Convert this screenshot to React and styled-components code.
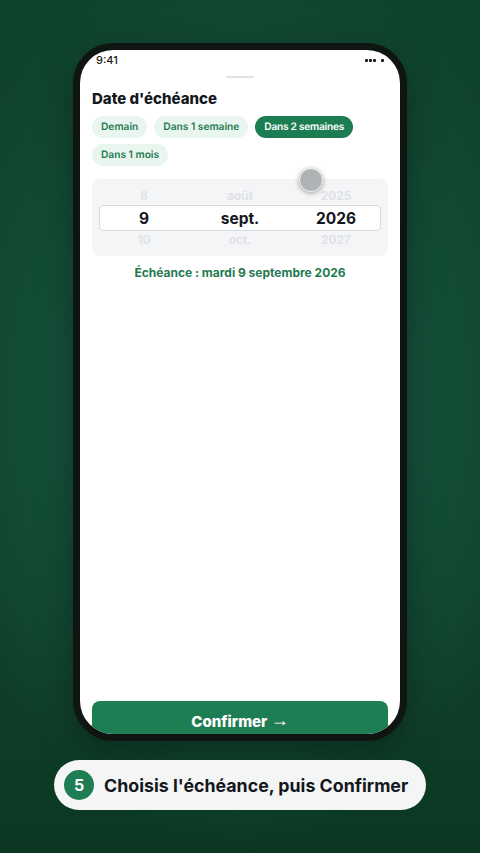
import React from "react";
import styled, { createGlobalStyle } from "styled-components";

const GlobalStyle = createGlobalStyle`
  html, body {
    margin: 0;
    padding: 0;
    background: #0f4029;
    font-family: Inter, "Noto Sans", sans-serif;
  }
`;

const presets = [
  { label: "Demain" },
  { label: "Dans 1 semaine" },
  { label: "Dans 2 semaines", active: true },
  { label: "Dans 1 mois" },
];

const rows = [
  ["8", "août", "2025"],
  ["9", "sept.", "2026"],
  ["10", "oct.", "2027"],
];

function App() {
  return (
    <Page>
      <GlobalStyle />
      <Phone>
        <Screen>
          <StatusBar>
            <span>9:41</span>
            <StatusDots>
              <Dot />
              <Dot />
              <Dot />
              <Dot $gap />
            </StatusDots>
          </StatusBar>
          <Handle />
          <Title>Date d'échéance</Title>
          <Chips>
            {presets.map((p) => (
              <Chip key={p.label} $active={p.active}>
                {p.label}
              </Chip>
            ))}
          </Chips>
          <Wheel>
            <Touch />
            {rows.map((r, i) => (
              <WheelRow key={r[0]} $selected={i === 1}>
                {r.map((v) => (
                  <span key={v}>{v}</span>
                ))}
              </WheelRow>
            ))}
          </Wheel>
          <DueDate>Échéance : mardi 9 septembre 2026</DueDate>
          <Spacer />
          <ConfirmButton>
            Confirmer <Arrow>→</Arrow>
          </ConfirmButton>
        </Screen>
      </Phone>
      <Caption>
        <StepBadge>5</StepBadge>
        <CaptionText>Choisis l'échéance, puis Confirmer</CaptionText>
      </Caption>
    </Page>
  );
}

const Page = styled.div`
  width: 480px;
  height: 853px;
  overflow: hidden;
  box-sizing: border-box;
  padding-top: 43px;
  display: flex;
  flex-direction: column;
  align-items: center;
  background:
    radial-gradient(ellipse 320px 440px at 50% 47%, #175a3b 0%, #14503a 55%, rgba(15, 64, 41, 0) 100%),
    linear-gradient(180deg, #0f442c 0%, #0f4029 70%, #0c3823 100%);
`;

const Phone = styled.div`
  width: 334px;
  height: 698px;
  box-sizing: border-box;
  padding: 7px;
  border-radius: 40px;
  background: #0e1512;
  box-shadow: 0 12px 36px rgba(0, 0, 0, 0.35);
`;

const Screen = styled.div`
  height: 100%;
  box-sizing: border-box;
  padding: 0 12px;
  border-radius: 33px;
  overflow: hidden;
  background: #ffffff;
  display: flex;
  flex-direction: column;
`;

const StatusBar = styled.div`
  height: 20px;
  padding: 0 4px;
  display: flex;
  align-items: center;
  justify-content: space-between;
  font-size: 11px;
  font-weight: 500;
  color: #1a1c20;
`;

const StatusDots = styled.div`
  display: flex;
  gap: 1px;
`;

const Dot = styled.i`
  width: 3px;
  height: 3px;
  margin-left: ${(p) => (p.$gap ? "4px" : "0")};
  background: #1a1c20;
  border-radius: 1px;
`;

const Handle = styled.div`
  width: 28px;
  height: 2px;
  margin: 6px auto 0;
  border-radius: 1px;
  background: #e0e2e4;
`;

const Title = styled.h1`
  margin: 11px 0 0;
  font-size: 15px;
  line-height: 20px;
  font-weight: 800;
  color: #14171c;
`;

const Chips = styled.div`
  margin-top: 7px;
  display: flex;
  flex-wrap: wrap;
  gap: 6px 7px;
`;

const Chip = styled.div`
  height: 22px;
  padding: 0 9px;
  display: flex;
  align-items: center;
  border-radius: 11px;
  font-size: 10.2px;
  font-weight: 600;
  text-rendering: geometricPrecision;
  letter-spacing: ${(p) => (p.$active ? "-0.27px" : "0")};
  color: ${(p) => (p.$active ? "#ffffff" : "#1f7a50")};
  background: ${(p) => (p.$active ? "#1c7d52" : "#e9f5ef")};
`;

const Wheel = styled.div`
  position: relative;
  margin-top: 13px;
  height: 77px;
  box-sizing: border-box;
  padding: 6px 4px 0;
  border-radius: 8px;
  background: #f3f5f7;
  display: flex;
  flex-direction: column;
`;

const WheelRow = styled.div`
  position: relative;
  height: ${(p) => (p.$selected ? "26px" : "20px")};
  margin-bottom: ${(p) => (p.$selected ? "-2px" : "0")};
  display: grid;
  grid-template-columns: repeat(3, 96px);
  align-items: center;
  justify-items: center;
  font-weight: ${(p) => (p.$selected ? 700 : 600)};
  font-size: ${(p) => (p.$selected ? "15.5px" : "12px")};
  color: ${(p) => (p.$selected ? "#14171c" : "#dfe1e4")};

  & > span {
    position: relative;
  }

  &::before {
    content: "";
    display: ${(p) => (p.$selected ? "block" : "none")};
    position: absolute;
    inset: 0 3px;
    border: 1px solid #d6d9dd;
    border-radius: 5px;
    background: #ffffff;
  }
`;

const Touch = styled.div`
  position: absolute;
  z-index: 2;
  top: -11px;
  left: 207px;
  width: 22px;
  height: 22px;
  border-radius: 50%;
  background: #b0b3b5;
  border: 1.5px solid #f4f4ee;
  box-shadow: 0 1px 5px rgba(0, 0, 0, 0.35);
`;

const DueDate = styled.div`
  margin-top: 9px;
  text-align: center;
  font-size: 12px;
  line-height: 16px;
  font-weight: 700;
  color: #1f7a50;
`;

const Spacer = styled.div`
  flex: 1;
`;

const ConfirmButton = styled.button`
  flex: none;
  height: 40px;
  margin-bottom: -7px;
  border: none;
  border-radius: 8px;
  background: #1f7d54;
  color: #ffffff;
  font-family: inherit;
  font-size: 15px;
  font-weight: 800;
`;

const Arrow = styled.span`
  font-family: "Liberation Sans", sans-serif;
  font-weight: 400;
  font-size: 18px;
  line-height: 1;
  vertical-align: 1px;
`;

const Caption = styled.div`
  margin-top: 19px;
  width: 372px;
  height: 50px;
  box-sizing: border-box;
  padding: 0 10px;
  border-radius: 25px;
  background: #f4f5f5;
  display: flex;
  align-items: center;
  gap: 10px;
`;

const StepBadge = styled.div`
  width: 30px;
  height: 30px;
  border-radius: 50%;
  background: #1f7d54;
  color: #ffffff;
  display: flex;
  align-items: center;
  justify-content: center;
  font-size: 16px;
  font-weight: 700;
`;

const CaptionText = styled.div`
  font-size: 17.8px;
  font-weight: 700;
  white-space: nowrap;
  color: #14171c;
`;

export default App;
